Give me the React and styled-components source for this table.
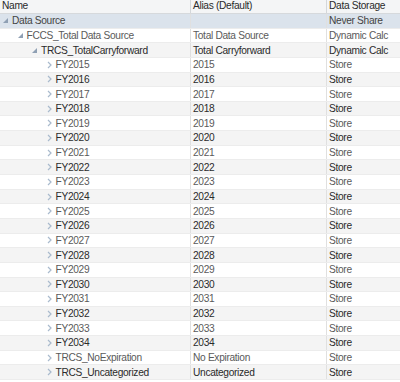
import styled, { createGlobalStyle } from "styled-components";

const Global = createGlobalStyle`
  html, body {
    margin: 0;
    padding: 0;
    background: #fff;
  }
  body {
    font-family: "Liberation Sans", Arial, sans-serif;
    font-size: 10.2px;
    letter-spacing: -0.32px;
    overflow: hidden;
  }
`;

const COLS = "191px 136px 1fr";

const Table = styled.div`
  width: 400px;
  height: 382px;
  overflow: hidden;
  background: #fff;
`;

const HeadRow = styled.div`
  display: grid;
  grid-template-columns: ${COLS};
  height: 14px;
  background: #f4f5f6;
  border-bottom: 1px solid #d6d9dc;
  box-sizing: border-box;
  color: #2a2a2a;
`;

const HeadCell = styled.div`
  padding-left: 2px;
  line-height: 12px;
  border-right: 1px solid #d4d7da;
  white-space: nowrap;
  overflow: hidden;
  &:last-child {
    border-right: none;
  }
`;

const Row = styled.div`
  display: grid;
  grid-template-columns: ${COLS};
  height: 14.65px;
  box-sizing: border-box;
  border-bottom: 1px solid #ececec;
  background: ${(p) => (p.$selected ? "#dbe3ec" : p.$alt ? "#f4f4f4" : "#fff")};
  color: ${(p) => (p.$selected ? "#444" : p.$alt ? "#2b2b2b" : "#5a5a5a")};
`;

const Cell = styled.div`
  display: flex;
  align-items: center;
  padding-left: 2px;
  border-right: 1px solid #e0e0e0;
  white-space: nowrap;
  overflow: hidden;
  &:last-child {
    border-right: none;
  }
`;

const NameCell = styled(Cell)`
  padding-left: ${(p) => 3 + p.$level * 14.5}px;
`;

const Toggle = styled.span`
  display: inline-flex;
  align-items: center;
  width: 9px;
  flex: none;
`;

function Expanded() {
  return (
    <svg width="5" height="5" viewBox="0 0 5 5">
      <polygon points="5,0 5,5 0,5" fill="#8fa0b4" />
    </svg>
  );
}

function Collapsed() {
  return (
    <svg width="5" height="8" viewBox="0 0 5 8">
      <polyline points="1,1 4,4 1,7" fill="none" stroke="#a9bacd" strokeWidth="1.2" />
    </svg>
  );
}

const years = Array.from({ length: 20 }, (_, i) => 2015 + i);

const rows = [
  { name: "Data Source", alias: "", storage: "Never Share", level: 0, open: true, selected: true },
  { name: "FCCS_Total Data Source", alias: "Total Data Source", storage: "Dynamic Calc", level: 1, open: true },
  { name: "TRCS_TotalCarryforward", alias: "Total Carryforward", storage: "Dynamic Calc", level: 2, open: true },
  ...years.map((y) => ({ name: `FY${y}`, alias: `${y}`, storage: "Store", level: 3 })),
  { name: "TRCS_NoExpiration", alias: "No Expiration", storage: "Store", level: 3 },
  { name: "TRCS_Uncategorized", alias: "Uncategorized", storage: "Store", level: 3 },
];

export default function App() {
  return (
    <Table>
      <Global />
      <HeadRow>
        <HeadCell>Name</HeadCell>
        <HeadCell>Alias (Default)</HeadCell>
        <HeadCell>Data Storage</HeadCell>
      </HeadRow>
      {rows.map((r, i) => (
        <Row key={r.name} $selected={r.selected} $alt={i % 2 === 0 && !r.selected}>
          <NameCell $level={r.level}>
            <Toggle>{r.open ? <Expanded /> : <Collapsed />}</Toggle>
            {r.name}
          </NameCell>
          <Cell>{r.alias}</Cell>
          <Cell>{r.storage}</Cell>
        </Row>
      ))}
    </Table>
  );
}
